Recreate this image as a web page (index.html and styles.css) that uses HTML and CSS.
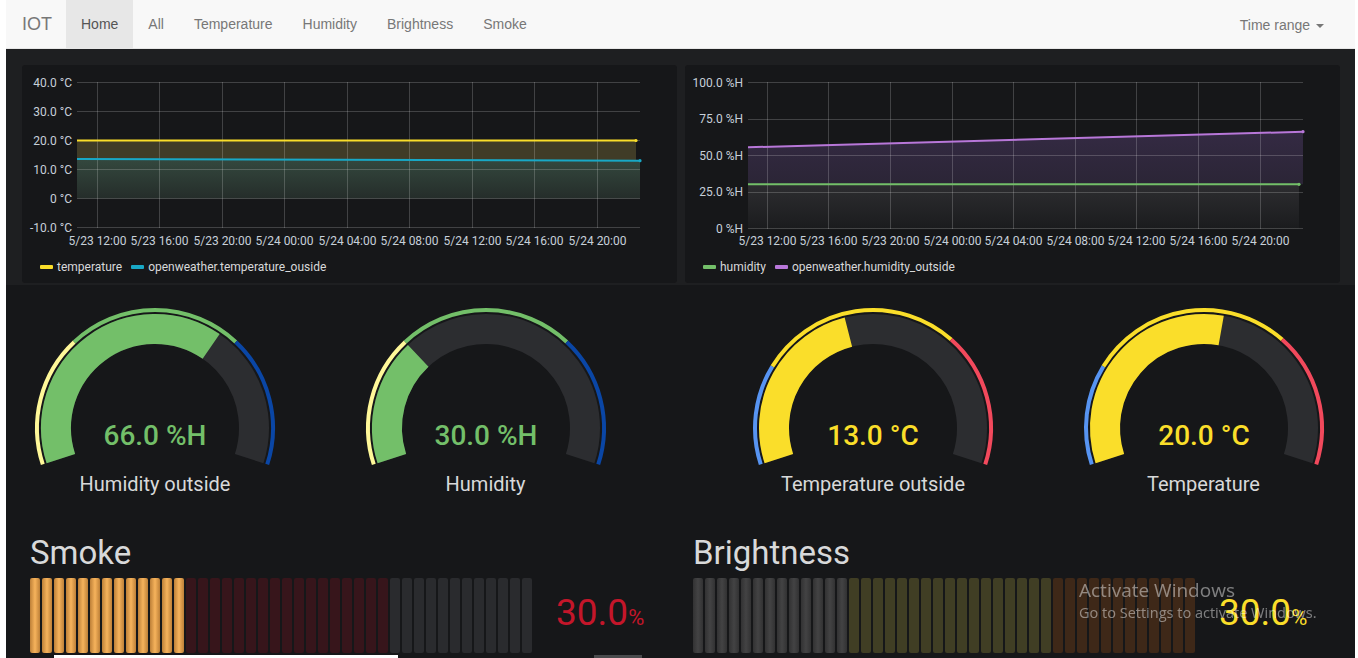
FILE: index.html
```html
<!DOCTYPE html>
<html lang="en">
<head>
<meta charset="utf-8">
<title>IOT</title>
<link rel="stylesheet" href="styles.css">
</head>
<body>
<div class="page">
  <nav class="navbar">
    <a class="brand">IOT</a>
    <ul class="nav">
      <li class="active"><a>Home</a></li>
      <li><a>All</a></li>
      <li><a>Temperature</a></li>
      <li><a>Humidity</a></li>
      <li><a>Brightness</a></li>
      <li><a>Smoke</a></li>
    </ul>
    <a class="dropdown">Time range <span class="caret"></span></a>
  </nav>

  <main class="main">
    <section class="charts">
      <div class="panel">
        <svg class="chart" width="655" height="194" viewBox="0 0 655 194">
          <defs>
            <linearGradient id="tealFill" x1="0" y1="0" x2="0" y2="1">
              <stop offset="0" stop-color="#34483e"/>
              <stop offset="1" stop-color="#252d2a"/>
            </linearGradient>
          </defs>
          <polygon points="55,75.5 614,75.5 614,95.6 55,94" fill="#403c27"/>
          <polygon points="55,94 618,95.7 618,133.5 55,133.5" fill="url(#tealFill)"/>
          <g class="grid">
            <line x1="55" y1="17.5" x2="618" y2="17.5"/>
            <line x1="55" y1="46.5" x2="618" y2="46.5"/>
            <line x1="55" y1="75.5" x2="618" y2="75.5"/>
            <line x1="55" y1="104.5" x2="618" y2="104.5"/>
            <line x1="55" y1="133.5" x2="618" y2="133.5"/>
            <line x1="55" y1="162.5" x2="618" y2="162.5"/>
            <line x1="75.5" y1="17" x2="75.5" y2="163"/>
            <line x1="137.5" y1="17" x2="137.5" y2="163"/>
            <line x1="200.5" y1="17" x2="200.5" y2="163"/>
            <line x1="262.5" y1="17" x2="262.5" y2="163"/>
            <line x1="325.5" y1="17" x2="325.5" y2="163"/>
            <line x1="387.5" y1="17" x2="387.5" y2="163"/>
            <line x1="450.5" y1="17" x2="450.5" y2="163"/>
            <line x1="512.5" y1="17" x2="512.5" y2="163"/>
            <line x1="575.5" y1="17" x2="575.5" y2="163"/>
          </g>
          <line x1="55" y1="75.5" x2="614" y2="75.5" stroke="#fade2a" stroke-width="2"/>
          <line x1="55" y1="94" x2="618" y2="95.7" stroke="#18a8c6" stroke-width="2"/>
          <circle cx="614" cy="75.5" r="1.6" fill="#fade2a"/>
          <circle cx="618" cy="95.7" r="1.6" fill="#18a8c6"/>
          <g class="ylab">
            <text x="50" y="17.5">40.0 °C</text>
            <text x="50" y="46.5">30.0 °C</text>
            <text x="50" y="75.5">20.0 °C</text>
            <text x="50" y="104.5">10.0 °C</text>
            <text x="50" y="133.5">0 °C</text>
            <text x="50" y="162.5">-10.0 °C</text>
          </g>
          <g class="xlab">
            <text x="75.5" y="176">5/23 12:00</text>
            <text x="137.5" y="176">5/23 16:00</text>
            <text x="200.5" y="176">5/23 20:00</text>
            <text x="262.5" y="176">5/24 00:00</text>
            <text x="325.5" y="176">5/24 04:00</text>
            <text x="387.5" y="176">5/24 08:00</text>
            <text x="450.5" y="176">5/24 12:00</text>
            <text x="512.5" y="176">5/24 16:00</text>
            <text x="575.5" y="176">5/24 20:00</text>
          </g>
        </svg>
        <div class="legend">
          <span class="item"><i class="dash yellow"></i>temperature</span>
          <span class="item"><i class="dash cyan"></i>openweather.temperature_ouside</span>
        </div>
      </div>

      <div class="panel">
        <svg class="chart" width="655" height="194" viewBox="0 0 655 194">
          <defs>
            <linearGradient id="purpleFill" x1="0" y1="0" x2="0" y2="1">
              <stop offset="0" stop-color="#342a43"/>
              <stop offset="1" stop-color="#2b2536"/>
            </linearGradient>
            <linearGradient id="grayFill" x1="0" y1="0" x2="0" y2="1">
              <stop offset="0" stop-color="#2d2d30"/>
              <stop offset="1" stop-color="#1b1c1e"/>
            </linearGradient>
          </defs>
          <polygon points="63,82.3 618,66.7 618,119.3 63,119.3" fill="url(#purpleFill)"/>
          <polygon points="63,119.3 614,119.3 614,163.5 63,163.5" fill="url(#grayFill)"/>
          <g class="grid">
            <line x1="63" y1="17.5" x2="618" y2="17.5"/>
            <line x1="63" y1="54.5" x2="618" y2="54.5"/>
            <line x1="63" y1="90.5" x2="618" y2="90.5"/>
            <line x1="63" y1="127.5" x2="618" y2="127.5"/>
            <line x1="63" y1="163.5" x2="618" y2="163.5"/>
            <line x1="82.5" y1="17" x2="82.5" y2="164"/>
            <line x1="143.5" y1="17" x2="143.5" y2="164"/>
            <line x1="205.5" y1="17" x2="205.5" y2="164"/>
            <line x1="267.5" y1="17" x2="267.5" y2="164"/>
            <line x1="328.5" y1="17" x2="328.5" y2="164"/>
            <line x1="390.5" y1="17" x2="390.5" y2="164"/>
            <line x1="451.5" y1="17" x2="451.5" y2="164"/>
            <line x1="513.5" y1="17" x2="513.5" y2="164"/>
            <line x1="575.5" y1="17" x2="575.5" y2="164"/>
          </g>
          <line x1="63" y1="82.3" x2="618" y2="66.7" stroke="#b877d9" stroke-width="2"/>
          <line x1="63" y1="119.3" x2="614" y2="119.3" stroke="#73bf69" stroke-width="2"/>
          <circle cx="618" cy="66.7" r="1.6" fill="#b877d9"/>
          <circle cx="614" cy="119.3" r="1.6" fill="#73bf69"/>
          <g class="ylab">
            <text x="58" y="17.5">100.0 %H</text>
            <text x="58" y="54">75.0 %H</text>
            <text x="58" y="90.5">50.0 %H</text>
            <text x="58" y="127">25.0 %H</text>
            <text x="58" y="163.5">0 %H</text>
          </g>
          <g class="xlab">
            <text x="82.5" y="176">5/23 12:00</text>
            <text x="143.5" y="176">5/23 16:00</text>
            <text x="205.5" y="176">5/23 20:00</text>
            <text x="267.5" y="176">5/24 00:00</text>
            <text x="328.5" y="176">5/24 04:00</text>
            <text x="390.5" y="176">5/24 08:00</text>
            <text x="451.5" y="176">5/24 12:00</text>
            <text x="513.5" y="176">5/24 16:00</text>
            <text x="575.5" y="176">5/24 20:00</text>
          </g>
        </svg>
        <div class="legend">
          <span class="item"><i class="dash green"></i>humidity</span>
          <span class="item"><i class="dash purple"></i>openweather.humidity_outside</span>
        </div>
      </div>
    </section>

    <section class="gauges">
      <div class="gauge-pair">
        <div class="gauge">
          <svg width="298" height="172" viewBox="0 0 298 172">
            <g fill="none" stroke-width="4">
              <path d="M36.78 164.46 A118 118 0 0 1 68.22 41.98" stroke="#fff899"/>
              <path d="M68.22 41.98 A118 118 0 0 1 229.78 41.98" stroke="#73bf69"/>
              <path d="M229.78 41.98 A118 118 0 0 1 261.22 164.46" stroke="#0a46a5"/>
            </g>
            <g fill="none" stroke-width="30">
              <path d="M54.85 158.59 A99 99 0 1 1 243.15 158.59" stroke="#2c2d30"/>
              <path d="M54.85 158.59 A99 99 0 0 1 205.16 46.47" stroke="#73bf69"/>
            </g>
            <text class="gval green-t" x="149" y="135">66.0 %H</text>
          </svg>
          <div class="glabel">Humidity outside</div>
        </div>
        <div class="gauge">
          <svg width="298" height="172" viewBox="0 0 298 172">
            <g fill="none" stroke-width="4">
              <path d="M36.78 164.46 A118 118 0 0 1 68.22 41.98" stroke="#fff899"/>
              <path d="M68.22 41.98 A118 118 0 0 1 229.78 41.98" stroke="#73bf69"/>
              <path d="M229.78 41.98 A118 118 0 0 1 261.22 164.46" stroke="#0a46a5"/>
            </g>
            <g fill="none" stroke-width="30">
              <path d="M54.85 158.59 A99 99 0 1 1 243.15 158.59" stroke="#2c2d30"/>
              <path d="M54.85 158.59 A99 99 0 0 1 81.23 55.83" stroke="#73bf69"/>
            </g>
            <text class="gval green-t" x="149" y="135">30.0 %H</text>
          </svg>
          <div class="glabel">Humidity</div>
        </div>
      </div>
      <div class="gauge-pair">
        <div class="gauge">
          <svg width="298" height="172" viewBox="0 0 298 172">
            <g fill="none" stroke-width="4">
              <path d="M36.78 164.46 A118 118 0 0 1 48.39 66.34" stroke="#5794f2"/>
              <path d="M48.39 66.34 A118 118 0 0 1 227.19 39.62" stroke="#fade2a"/>
              <path d="M227.19 39.62 A118 118 0 0 1 261.22 164.46" stroke="#f2495c"/>
            </g>
            <g fill="none" stroke-width="30">
              <path d="M54.85 158.59 A99 99 0 1 1 243.15 158.59" stroke="#2c2d30"/>
              <path d="M54.85 158.59 A99 99 0 0 1 124.38 32.11" stroke="#fade2a"/>
            </g>
            <text class="gval yellow-t" x="149" y="135">13.0 °C</text>
          </svg>
          <div class="glabel">Temperature outside</div>
        </div>
        <div class="gauge">
          <svg width="298" height="172" viewBox="0 0 298 172">
            <g fill="none" stroke-width="4">
              <path d="M36.78 164.46 A118 118 0 0 1 48.39 66.34" stroke="#5794f2"/>
              <path d="M48.39 66.34 A118 118 0 0 1 227.19 39.62" stroke="#fade2a"/>
              <path d="M227.19 39.62 A118 118 0 0 1 261.22 164.46" stroke="#f2495c"/>
            </g>
            <g fill="none" stroke-width="30">
              <path d="M54.85 158.59 A99 99 0 1 1 243.15 158.59" stroke="#2c2d30"/>
              <path d="M54.85 158.59 A99 99 0 0 1 166.19 30.50" stroke="#fade2a"/>
            </g>
            <text class="gval yellow-t" x="149" y="135">20.0 °C</text>
          </svg>
          <div class="glabel">Temperature</div>
        </div>
      </div>
    </section>

    <section class="bars">
      <div class="bar-panel">
        <div class="bar-title">Smoke</div>
        <div class="bar-row">
          <div class="cells">
            <i class="c o"></i><i class="c o"></i><i class="c o"></i><i class="c o"></i><i class="c o"></i><i class="c o"></i><i class="c o"></i><i class="c o"></i><i class="c o"></i><i class="c o"></i><i class="c o"></i><i class="c o"></i><i class="c o"></i>
            <i class="c r"></i><i class="c r"></i><i class="c r"></i><i class="c r"></i><i class="c r"></i><i class="c r"></i><i class="c r"></i><i class="c r"></i><i class="c r"></i><i class="c r"></i><i class="c r"></i><i class="c r"></i><i class="c r"></i><i class="c r"></i><i class="c r"></i><i class="c r"></i><i class="c r"></i>
            <i class="c g"></i><i class="c g"></i><i class="c g"></i><i class="c g"></i><i class="c g"></i><i class="c g"></i><i class="c g"></i><i class="c g"></i><i class="c g"></i><i class="c g"></i><i class="c g"></i><i class="c g"></i>
          </div>
          <div class="bar-value red-t">30.0<span class="unit">%</span></div>
        </div>
      </div>
      <div class="bar-panel">
        <div class="bar-title">Brightness</div>
        <div class="bar-row">
          <div class="cells">
            <i class="c w"></i><i class="c w"></i><i class="c w"></i><i class="c w"></i><i class="c w"></i><i class="c w"></i><i class="c w"></i><i class="c w"></i><i class="c w"></i><i class="c w"></i><i class="c w"></i><i class="c w"></i><i class="c w"></i>
            <i class="c y"></i><i class="c y"></i><i class="c y"></i><i class="c y"></i><i class="c y"></i><i class="c y"></i><i class="c y"></i><i class="c y"></i><i class="c y"></i><i class="c y"></i><i class="c y"></i><i class="c y"></i><i class="c y"></i><i class="c y"></i><i class="c y"></i><i class="c y"></i><i class="c y"></i>
            <i class="c b"></i><i class="c b"></i><i class="c b"></i><i class="c b"></i><i class="c b"></i><i class="c b"></i><i class="c b"></i><i class="c b"></i><i class="c b"></i><i class="c b"></i><i class="c b"></i><i class="c b"></i>
          </div>
          <div class="bar-value yellow-t">30.0<span class="unit">%</span></div>
        </div>
      </div>
    </section>

    <div class="next-row">
      <span class="next-white"></span>
      <span class="next-gray"></span>
    </div>
  </main>
</div>

<div class="watermark">
  <div class="wm-title">Activate Windows</div>
  <div class="wm-sub">Go to Settings to activate Windows.</div>
</div>
</body>
</html>
```

FILE: styles.css
```css
html, body {
  margin: 0;
  padding: 0;
  height: 100%;
  overflow: hidden;
}

body {
  background: #ffffff;
  font-family: Roboto, "Liberation Sans", sans-serif;
}

.page {
  margin: 0 3px 0 6px;
  height: 658px;
  overflow: hidden;
  display: flex;
  flex-direction: column;
}

/* Navbar */
.navbar {
  display: flex;
  align-items: stretch;
  height: 48px;
  background: #f8f8f8;
  border-bottom: 1px solid #e7e7e7;
  padding-right: 16px;
  font-family: "Liberation Sans", Arial, sans-serif;
  flex: none;
}

.brand {
  padding: 0 14px 0 16px;
  font-size: 18px;
  line-height: 48px;
  color: #777777;
}

.nav {
  display: flex;
  margin: 0;
  padding: 0;
  list-style: none;
}

.nav a {
  display: block;
  padding: 0 15px;
  font-size: 14px;
  line-height: 48px;
  color: #777777;
}

.nav .active a {
  background: #e7e7e7;
  color: #555555;
}

.dropdown {
  margin-left: auto;
  padding: 0 15px;
  font-size: 14px;
  line-height: 50px;
  color: #777777;
}

.caret {
  display: inline-block;
  width: 0;
  height: 0;
  margin-left: 2px;
  vertical-align: middle;
  border-top: 4px solid #777777;
  border-left: 4px solid transparent;
  border-right: 4px solid transparent;
}

/* Main */
.main {
  flex: 1;
  background: #161719;
}

.charts {
  display: flex;
  gap: 8px;
  padding: 16px 16px 2px;
  background: #1e1f21;
}

.panel {
  flex: 1;
  height: 218px;
  background: #161719;
  border-radius: 3px;
  display: flex;
  flex-direction: column;
}

.chart {
  display: block;
}

.grid line {
  stroke: rgba(255, 255, 255, 0.19);
  stroke-width: 1;
  shape-rendering: crispEdges;
}

.ylab text {
  font-family: Roboto, sans-serif;
  font-size: 12px;
  fill: #c7d0d9;
  text-anchor: end;
  dominant-baseline: central;
}

.xlab text {
  font-family: Roboto, sans-serif;
  font-size: 12px;
  fill: #c7d0d9;
  text-anchor: middle;
  dominant-baseline: central;
}

.legend {
  display: flex;
  gap: 9px;
  padding-left: 18px;
  height: 16px;
  font-size: 12px;
  line-height: 16px;
  color: #d8d9da;
}

.legend .item {
  display: flex;
  align-items: center;
}

.dash {
  display: inline-block;
  width: 13px;
  height: 4px;
  margin-right: 4px;
  border-radius: 1px;
}

.dash.yellow { background: #fade2a; }
.dash.cyan { background: #18a8c6; }
.dash.green { background: #73bf69; }
.dash.purple { background: #b877d9; }

/* Gauges */
.gauges {
  display: flex;
  gap: 89.5px;
  padding-top: 15px;
}

.gauge-pair {
  display: flex;
  gap: 32.5px;
}

.gauge {
  width: 298px;
}

.gauge svg {
  display: block;
}

.gval {
  font-family: Roboto, sans-serif;
  font-size: 28px;
  font-weight: 500;
  text-anchor: middle;
  dominant-baseline: central;
}

.green-t { fill: #73bf69; }
.yellow-t { fill: #fade2a; color: #fade2a; }
.red-t { color: #c4162a; }

.glabel {
  height: 24px;
  line-height: 24px;
  font-size: 20px;
  text-align: center;
  color: #d8d9da;
}

/* Bar gauges */
.bars {
  display: grid;
  grid-template-columns: 655px 655px;
  column-gap: 8px;
  padding: 37px 0 0 24px;
}

.bar-title {
  height: 40px;
  line-height: 40px;
  font-size: 33px;
  color: #d8d9da;
}

.bar-row {
  display: flex;
  align-items: center;
  margin-top: 5px;
  height: 75px;
}

.cells {
  display: flex;
  gap: 2px;
  height: 75px;
}

.c {
  display: block;
  width: 10px;
  height: 75px;
  border-radius: 2px;
}

.c.o { background: linear-gradient(90deg, #bd8038 0%, #f6b35c 50%, #bd8038 100%); }
.c.r { background: #37151b; }
.c.g { background: #2a2b2e; }
.c.w { background: linear-gradient(90deg, #323233 0%, #434344 50%, #323233 100%); }
.c.y { background: #403e24; }
.c.b { background: #3e2818; }

.bar-value {
  margin-left: 24px;
  font-size: 37px;
  line-height: 36px;
  white-space: nowrap;
}

.bar-value .unit {
  font-size: 22px;
}

/* Next row peeking at the bottom */
.next-row {
  display: flex;
  margin-top: 2px;
  height: 3px;
}

.next-white {
  display: block;
  margin-left: 48px;
  width: 344px;
  background: #ffffff;
}

.next-gray {
  display: block;
  margin-left: 196px;
  width: 48px;
  background: #4a4b4d;
}

/* Windows activation watermark */
.watermark {
  position: fixed;
  left: 1079px;
  top: 578px;
  font-family: "Open Sans", "Noto Sans", sans-serif;
  color: rgba(255, 255, 255, 0.45);
}

.wm-title {
  font-size: 19px;
  line-height: 24px;
}

.wm-sub {
  font-size: 14.5px;
  line-height: 22px;
}
```
